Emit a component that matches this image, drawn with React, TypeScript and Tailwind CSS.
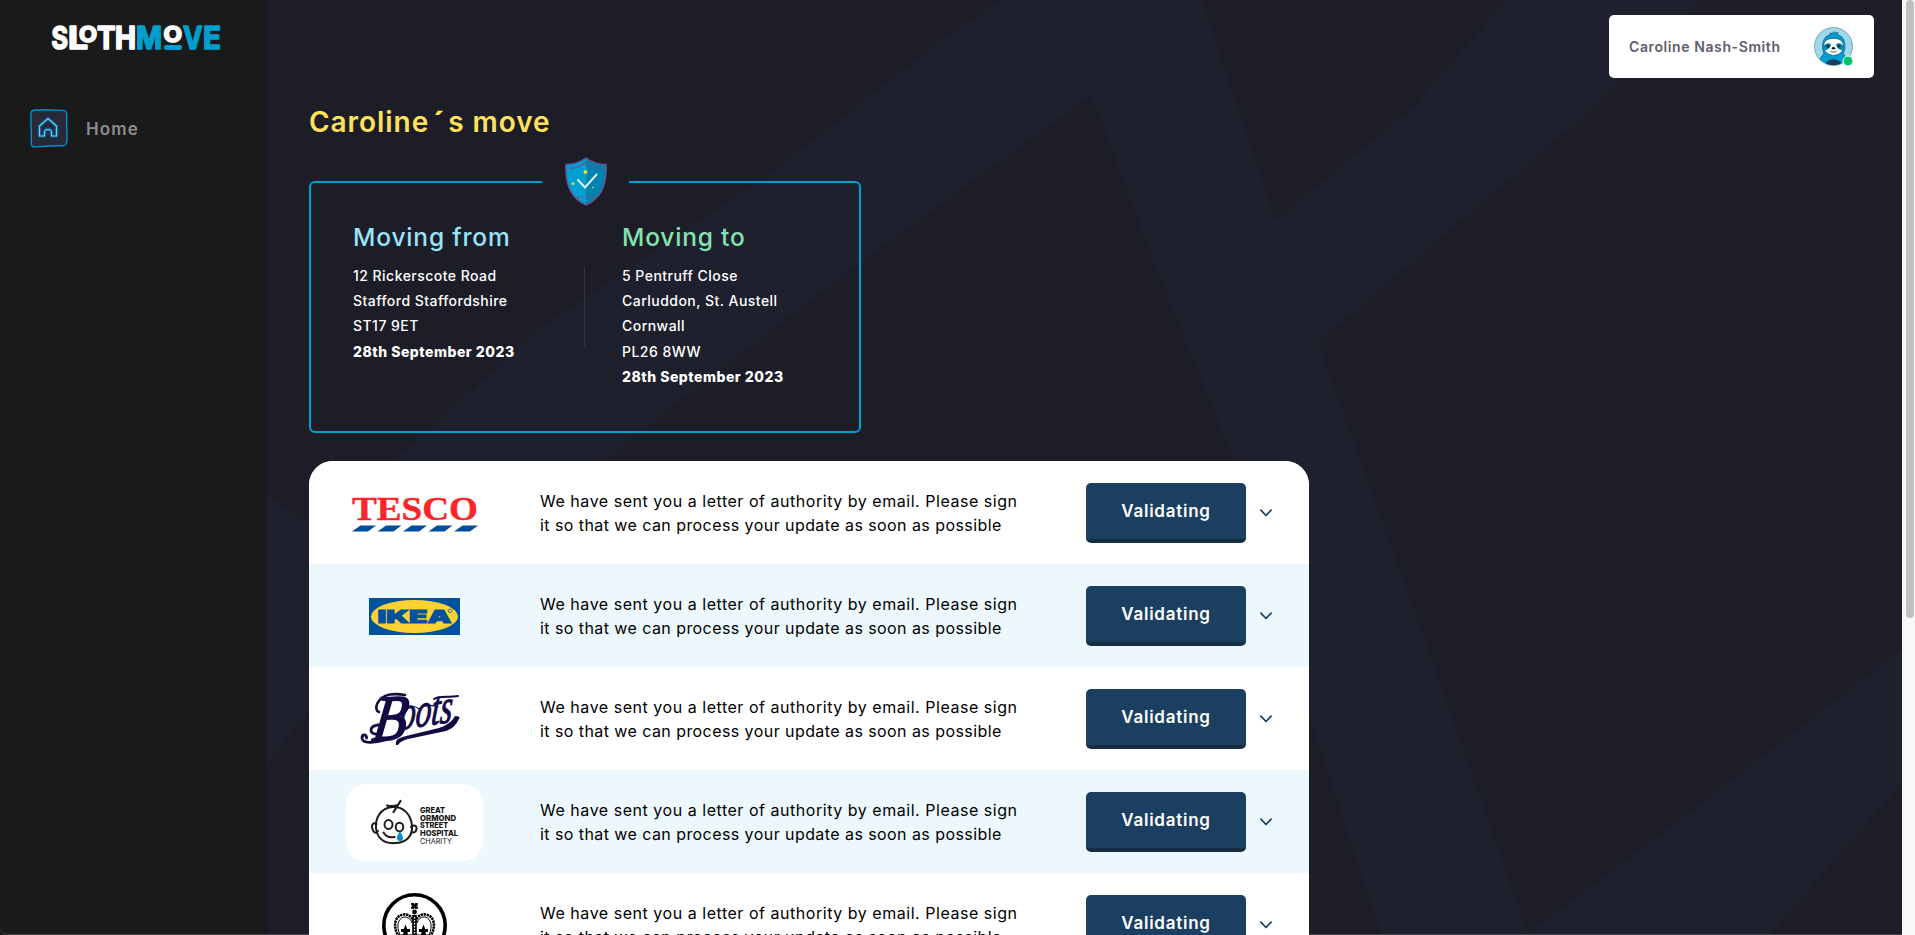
import type { ReactNode } from "react";

function Backdrop() {
  return (
    <svg className="absolute inset-0 h-full w-full" viewBox="268 0 1634 935" preserveAspectRatio="none" fill="#1e202d">
      <path d="M1003 0H1203L1222 60L1276 221L1413 107L1507 0H1702L1581 119L1318 343L1425 640L1528 935H1381L1305 700L1234 459L1159 274L1092 95L846 274L625 444L560 500H340L415 444L541 328L772 173L940 42Z" />
      <path d="M1902 650V784L1770 935H1528L1700 805Z" />
      <path d="M268 495L315 530V705L268 763Z" />
    </svg>
  );
}

function BrandLogo() {
  const common = {
    fontFamily: "Inter, sans-serif",
    fontWeight: 700,
    strokeWidth: 1.7,
    strokeLinejoin: "round" as const,
    lengthAdjust: "spacingAndGlyphs" as const,
  };
  return (
    <svg className="overflow-visible" width="178" height="50" viewBox="47 13 178 50">
      <g fill="#fff" stroke="#fff">
        <text x="51.5" y="49" fontSize="31.5" textLength="16.500" {...common}>S</text>
        <text x="68" y="49" fontSize="31.5" textLength="20" {...common}>L</text>
        <text x="79" y="42" fontSize="22" textLength="18" {...common}>O</text>
        <text x="97" y="49" fontSize="31.5" textLength="18.500" {...common}>T</text>
        <text x="115" y="49" fontSize="31.5" textLength="21" {...common}>H</text>
        <text x="163.5" y="42" fontSize="22" textLength="18.500" {...common}>O</text>
      </g>
      <g fill="#009dcf" stroke="#009dcf">
        <text x="136" y="49" fontSize="31.5" textLength="26" {...common}>M</text>
        <text x="183" y="49" fontSize="31.5" textLength="19.500" {...common}>V</text>
        <text x="203" y="49" fontSize="31.5" textLength="18" {...common}>E</text>
        <rect x="164.5" y="45.500" width="17" height="4" rx="1" />
      </g>
    </svg>
  );
}

function HomeBadge() {
  return (
    <svg width="38" height="39" viewBox="0 0 38 39" fill="none">
      <path d="M3.5 1.2C14 .2 24 1 34 1.6C36.500 2 37 4 36.800 7C36.200 16 37.500 25 36.800 33C36.500 36 35 36.800 31 36.800C22 36.500 12 37.500 4 38C1.800 38 1.200 36 1.300 33C1.800 23 .6 14 1 5C1.100 2.500 1.800 1.400 3.500 1.200Z" fill="#262936" stroke="#0090cf" strokeWidth="1.4" />
      <g strokeLinejoin="round">
        <path d="M9.500 27V17L18 9.500L26.500 17V27H21.500V23.500Q21.500 20.500 18 20.500T14.500 23.500V27Z" stroke="#0090e0" strokeOpacity=".45" strokeWidth="3.600" />
        <path d="M9.500 27V17L18 9.500L26.500 17V27H21.500V23.500Q21.500 20.500 18 20.500T14.500 23.500V27Z" stroke="#5fd0ff" strokeWidth="1.200" />
      </g>
    </svg>
  );
}

function Avatar() {
  return (
    <svg width="40" height="40" viewBox="0 0 40 40">
      <defs>
        <clipPath id="face">
          <circle cx="19.500" cy="19.500" r="18.800" />
        </clipPath>
      </defs>
      <circle cx="19.500" cy="19.500" r="19" fill="#9cd8ee" stroke="#6f9bb0" strokeWidth=".8" />
      <g clipPath="url(#face)">
        <path d="M4 40Q5 30 10 27Q8 22 8.500 17Q10 8.500 17 7.500L15.500 6L18.500 6.500L20 4.500L21 6L24 5.500L23.500 7.500Q31 10 31 19Q31 24 29 27Q35 31 36 40Z" fill="#009ed0" stroke="#174a68" strokeWidth=".6" />
        <path d="M9.500 18Q11 11 19.500 11.500Q28 11 29.500 18Q30 27.500 19.500 28.500Q9.500 27.500 9.500 18Z" fill="#fff" stroke="#174a68" strokeWidth=".6" />
        <path d="M9.600 19Q12 15 17 17Q17 22 10.500 23.500ZM29.400 19Q27 15 22 17Q22 22 28.500 23.500Z" fill="#0089b8" />
        <circle cx="14" cy="19" r="1.500" fill="#12212f" />
        <circle cx="25" cy="19" r="1.500" fill="#12212f" />
        <ellipse cx="19.500" cy="21.300" rx="1.800" ry="1.200" fill="#12212f" />
        <path d="M16.500 24.500Q19.500 25.800 22.500 24.500" fill="none" stroke="#12212f" strokeWidth=".7" />
        <ellipse cx="19.500" cy="37" rx="7.500" ry="4.600" fill="#1a3f60" />
      </g>
      <circle cx="34" cy="34" r="5" fill="#00c46a" stroke="#fff" strokeWidth="1" />
    </svg>
  );
}

function Shield() {
  return (
    <svg width="42" height="49" viewBox="0 0 42 49" fill="none">
      <path d="M21 1Q12 7.500 1 7.500C0 27 5 41 21 48C37 41 42 27 41 7.500Q30 7.500 21 1Z" fill="#00a0d2" />
      <path d="M21 1V48C37 41 42 27 41 7.500Q30 7.500 21 1Z" fill="#0083b0" />
      <path d="M21 1Q12 7.500 1 7.500C0 27 5 41 21 48C37 41 42 27 41 7.500Q30 7.500 21 1Z" stroke="#66528c" strokeWidth="1.500" />
      <path d="M5 11.300Q14 11 21 5.500Q27 10.500 32 10.800M34 11.300H37" stroke="#66528c" strokeWidth="1.400" />
      <path d="M13 39V42M17 39V42M21 39V42M25 39V42M29 39V42" stroke="#66528c" strokeWidth="1.300" />
      <path d="M12.500 22.500L20 30.500L32 17" stroke="#e8f6fb" strokeWidth="1.900" />
      <circle cx="20.500" cy="15" r="2" fill="#e6e04c" />
      <circle cx="8" cy="26.500" r="1.600" fill="#a9dc6a" />
      <circle cx="28" cy="30.500" r="1.100" fill="#7ccf8a" />
    </svg>
  );
}

function TescoLogo() {
  return (
    <svg className="mt-0.5 overflow-visible" width="126" height="46" viewBox="0 -6 126 46">
      <text x="0" y="23" fontFamily="'Liberation Serif', serif" fontWeight="700" fontSize="33" textLength="126" lengthAdjust="spacingAndGlyphs" fill="#fb2429" stroke="#fb2429" strokeWidth=".4">TESCO</text>
      <g fill="#004f9e">
        <path d="M0 34.500L8.500 28.500H24L16 34.500Z" />
        <path d="M25.500 34.500L34 28.500H49.500L41.500 34.500Z" />
        <path d="M51 34.500L59.500 28.500H75L67 34.500Z" />
        <path d="M76.500 34.500L85 28.500H100.500L92.500 34.500Z" />
        <path d="M102 34.500L110.500 28.500H126L118 34.500Z" />
      </g>
    </svg>
  );
}

function IkeaLogo() {
  return (
    <svg className="mt-0.5" width="91" height="37" viewBox="0 0 91 37">
      <rect width="91" height="37" fill="#00519e" />
      <ellipse cx="45.500" cy="18.500" rx="43.500" ry="16.500" fill="#ffd234" />
      <text x="8.500" y="24.800" fontFamily="Inter, sans-serif" fontWeight="900" fontSize="18" textLength="74" lengthAdjust="spacingAndGlyphs" fill="#00519e" stroke="#00519e" strokeWidth="1">IKEA</text>
      <circle cx="81" cy="12.800" r="1.800" fill="none" stroke="#00519e" strokeWidth=".7" />
    </svg>
  );
}

function BootsLogo() {
  return (
    <svg className="overflow-visible" width="100" height="70" viewBox="-1 -8 100 70">
      <g fill="#140b45" stroke="#140b45" fontFamily="'Liberation Serif', serif" fontStyle="italic">
        <text transform="translate(5 49) rotate(-4) skewX(-12)" fontSize="64" strokeWidth="1.800" textLength="34" lengthAdjust="spacingAndGlyphs">B</text>
        <text transform="translate(33 38) rotate(-9) skewX(-14)" fontSize="47" strokeWidth="1.100" textLength="53" lengthAdjust="spacingAndGlyphs">oots</text>
      </g>
      <g fill="none" stroke="#140b45" strokeLinecap="round" transform="translate(-5)">
        <path d="M18 20C12 18 16 5 29 2.500Q36 1.500 44 3" strokeWidth="2.600" />
        <path d="M17 33C8 34 8 42 15 42M24 48C14 51 1 52 1 46C1 42 6 42 5.500 46" strokeWidth="2.800" />
        <path d="M73 7C80 3 88 6 97 4" strokeWidth="2" />
        <path d="M45 17Q53 12 58 17Q67 11 77 15" strokeWidth="1.200" />
      </g>
      <path d="M30 53C29 47 33 46 40 44L73 36Q85 32 89 24Q95 24 93 27Q89 36 80 39L42 47Q34 49 32 53Z" fill="#140b45" />
    </svg>
  );
}

function HospitalLogo() {
  const line = { fontFamily: "Inter, sans-serif", lengthAdjust: "spacingAndGlyphs" as const, fontSize: 7.9, fill: "#141414" };
  return (
    <div className="mt-0.5 flex h-[77px] w-[137px] items-center justify-center rounded-[20px] bg-white">
      <svg width="88" height="48" viewBox="0 -1 88 48">
        <g fill="none" stroke="#1a1a1a" strokeWidth="2" strokeLinecap="round">
          <path d="M21 7C10 8 4 18 5 28C6 39 14 44 24 43C35 43 42 36 41 26C40 14 32 6 21 7Z" />
          <path d="M5.500 24C2 22 0 25 1.500 29C2.500 33 5 34 7 31M40 27C43 24 46 26 45.500 29C45 32 43 33 40.500 32" />
          <path d="M16 5.500Q22 7 27 5M29.500 1L22.500 12" strokeWidth="2.200" />
          <ellipse cx="17.500" cy="24.500" rx="4" ry="4.500" strokeWidth="1.900" />
          <ellipse cx="28.500" cy="27" rx="3.800" ry="4.300" strokeWidth="1.900" />
          <path d="M12.500 32.500Q16 38.500 23.500 37" />
        </g>
        <path d="M29 31Q26 36 26 38A3 3 0 0 0 32 38Q32 36 29 31Z" fill="#0090d8" />
        <g fontWeight="800">
          <text x="49" y="13" textLength="25" {...line}>GREAT</text>
          <text x="49" y="20.700" textLength="36" {...line}>ORMOND</text>
          <text x="49" y="28.300" textLength="28" {...line}>STREET</text>
          <text x="49" y="35.800" textLength="38" {...line}>HOSPITAL</text>
        </g>
        <text x="49" y="43.500" textLength="32" {...line} fontSize={7.4}>CHARITY</text>
      </svg>
    </div>
  );
}

function CrownLogo() {
  return (
    <svg className="mt-0.5" width="65" height="65" viewBox="0 0 65 65" fill="none">
      <circle cx="32.500" cy="32.500" r="30.700" stroke="#000" strokeWidth="3.600" />
      <path d="M29.200 10H31.800L32.500 11.500L33.200 10H35.800V12.300L34.500 13L35.800 13.700V16H33.200L32.500 14.500L31.800 16H29.200V13.700L30.500 13L29.200 12.300Z" fill="#000" />
      <circle cx="32.500" cy="19" r="2.400" fill="#000" />
      <path d="M17 44C10 33 13 23 21 21.500Q28 20.500 31.500 28M48 44C55 33 52 23 44 21.500Q37 20.500 33.500 28" stroke="#000" strokeWidth="2.600" strokeDasharray="2.300 .7" />
      <path d="M18 42C14 33 16 26 21.500 24Q28 23.500 30 30M47 42C51 33 49 26 43.500 24Q37 23.500 35 30" stroke="#000" strokeWidth="1" />
      <path d="M32.500 22V42" stroke="#000" strokeWidth="4.600" />
      <path d="M32.500 24V42" stroke="#fff" strokeWidth="1.400" strokeDasharray="1.500 1.500" />
      <path d="M23.500 31.500L25.200 36H28V39H25.700V44H21.300V39H19V36H21.800ZM41.500 31.500L43.200 36H46V39H43.700V44H39.300V39H37V36H39.800Z" fill="#000" />
      <path d="M16 41.500H49V48H16Z" fill="#000" />
    </svg>
  );
}

function UpdateRow({ logo, tinted }: { logo: ReactNode; tinted?: boolean }) {
  return (
    <li className={`flex h-[103px] shrink-0 items-center ${tinted ? "bg-[#edf8fd]" : "bg-white"}`}>
      <div className="flex w-[211px] justify-center">{logo}</div>
      <p className="ml-5 w-[546px] text-base leading-6 whitespace-nowrap text-black">
        <span className="tracking-[0.53px]">We have sent you a letter of authority by email. Please sign</span>
        <br />
        <span className="tracking-[0.43px]">it so that we can process your update as soon as possible</span>
      </p>
      <button className="mt-px h-[60px] w-40 rounded-[5px] border-b-4 border-[#182d42] bg-[#1a3f60] text-[17px] leading-none font-semibold tracking-[0.75px] text-white">
        Validating
      </button>
      <svg className="ml-3.5" width="12" height="8" viewBox="0 0 12 8" fill="none" stroke="#1a3f60" strokeWidth="1.700" strokeLinecap="round" strokeLinejoin="round">
        <path d="M.9 1.200L6 6.500L11.100 1.200" />
      </svg>
    </li>
  );
}

export default function App() {
  return (
    <div className="flex h-[935px] overflow-hidden bg-[#1d1d27] font-['Inter',sans-serif]">
      <aside className="w-[267px] shrink-0 rounded-bl-lg border-b border-[#454545] bg-[#1a1a1a]">
        <div className="pt-[13px] pl-[47px]">
          <BrandLogo />
        </div>
        <a className="mt-[46px] flex items-center gap-[18px] pl-[30px]">
          <HomeBadge />
          <span className="pt-0.5 text-[17px] font-semibold tracking-[1.1px] text-[#8c8c8c]">Home</span>
        </a>
      </aside>

      <main className="relative flex-1 border-b border-[#45454d] pl-[42px]">
        <Backdrop />
        <div className="relative flex flex-col">
          <header className="flex justify-end pt-[15px] pr-7">
            <div className="flex h-[63px] w-[265px] items-center justify-between rounded-[5px] bg-white pr-[20px] pl-5">
              <span className="text-sm font-semibold tracking-[0.6px] text-[#5f5c6c]">Caroline Nash-Smith</span>
              <Avatar />
            </div>
          </header>

          <h1 className="mt-6 text-[28px] leading-10 font-semibold tracking-[0.95px] text-[#ffe15c]">
            Caroline<span className="mr-0.5 ml-1 inline-block w-[13px] origin-top scale-x-150 text-center leading-none">´</span>s move
          </h1>

          <fieldset className="mt-[15px] h-[276px] w-[552px] rounded-md border-2 border-[#009fd0]">
            <legend className="mx-auto flex w-[87px] justify-center pl-px">
              <Shield />
            </legend>
            <div className="flex pt-[13px] pl-[42px] text-sm leading-[25.2px] font-medium tracking-[0.47px] text-white">
              <section className="w-[231px]">
                <h2 className="mb-2 text-[24.5px] leading-9 tracking-[0.85px] text-[#9be3fa]">Moving from</h2>
                <p>12 Rickerscote Road</p>
                <p>Stafford Staffordshire</p>
                <p>ST17 9ET</p>
                <p className="font-extrabold tracking-[0.52px]">28th September 2023</p>
              </section>
              <div className="mt-12 h-20 w-px bg-[#33343f]" />
              <section className="ml-[37px]">
                <h2 className="mb-2 text-[24.5px] leading-9 tracking-[0.8px] text-[#86e3b2]">Moving to</h2>
                <p>5 Pentruff Close</p>
                <p>Carluddon, St. Austell</p>
                <p>Cornwall</p>
                <p>PL26 8WW</p>
                <p className="font-extrabold tracking-[0.52px]">28th September 2023</p>
              </section>
            </div>
          </fieldset>

          <ul className="mt-7 flex h-[474px] w-[1000px] flex-col overflow-hidden rounded-t-3xl bg-white">
            <UpdateRow logo={<TescoLogo />} />
            <UpdateRow logo={<IkeaLogo />} tinted />
            <UpdateRow logo={<BootsLogo />} />
            <UpdateRow logo={<HospitalLogo />} tinted />
            <UpdateRow logo={<CrownLogo />} />
          </ul>
        </div>
      </main>

      <div className="w-[13px] shrink-0 bg-[#f8f8f8] pl-1">
        <div className="h-[618px] w-2 rounded-full bg-[#c1c1c1]" />
      </div>
    </div>
  );
}
